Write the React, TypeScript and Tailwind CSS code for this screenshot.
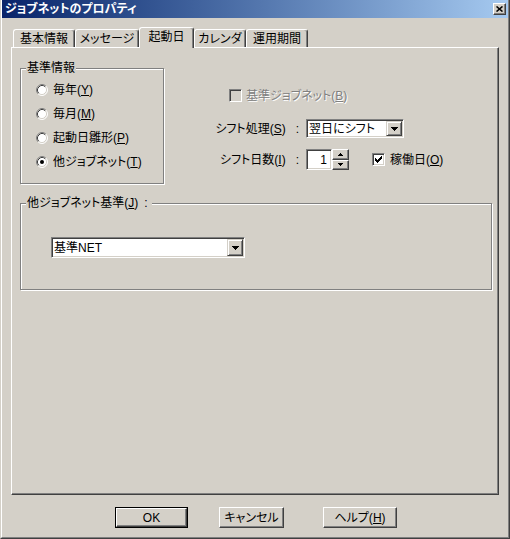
import React from 'react';

const RAISED =
  'border border-t-white border-l-white border-r-[#404040] border-b-[#404040] shadow-[inset_-1px_-1px_0_#808080]';
const SUNKEN =
  'border border-t-[#808080] border-l-[#808080] border-r-white border-b-white shadow-[inset_1px_1px_0_#404040,inset_-1px_-1px_0_#d4d0c8]';
const ETCHED = 'border border-[#808080] shadow-[inset_1px_1px_0_#fff,1px_1px_0_#fff]';
const DISABLED_TEXT = 'text-[#808080] [text-shadow:1px_1px_0_#fff]';

function Radio({ checked }: { checked?: boolean }) {
  return (
    <svg width="12" height="12" viewBox="0 0 12 12" className="shrink-0">
      <circle cx="6" cy="6" r="5" fill="#fff" />
      <path d="M2.11 9.89 A5.5 5.5 0 0 1 9.89 2.11" fill="none" stroke="#808080" />
      <path d="M9.89 2.11 A5.5 5.5 0 0 1 2.11 9.89" fill="none" stroke="#fff" />
      <path d="M2.82 9.18 A4.5 4.5 0 0 1 9.18 2.82" fill="none" stroke="#404040" />
      <path d="M9.18 2.82 A4.5 4.5 0 0 1 2.82 9.18" fill="none" stroke="#d4d0c8" />
      {checked && <circle cx="6" cy="6" r="2" fill="#000" />}
    </svg>
  );
}

function Checkbox({ checked, disabled }: { checked?: boolean; disabled?: boolean }) {
  // classic 7x7 pixel check mark
  const cols = [2, 3, 4, 3, 2, 1, 0];
  return (
    <div className={`${SUNKEN} w-[13px] h-[13px] p-[1px] shrink-0 ${disabled ? 'bg-[#d4d0c8]' : 'bg-white'}`}>
      {checked && (
        <svg width="9" height="9" viewBox="0 0 9 9" shapeRendering="crispEdges">
          {cols.map((top, i) => (
            <rect key={i} x={i + 1} y={top + 1} width="1" height="3" fill="#000" />
          ))}
        </svg>
      )}
    </div>
  );
}

function Arrow() {
  return (
    <svg width="7" height="4" viewBox="0 0 7 4" shapeRendering="crispEdges">
      <polygon points="0,0 7,0 3.5,4" fill="#000" />
    </svg>
  );
}

function SmallArrow({ up }: { up?: boolean }) {
  return (
    <svg width="5" height="3" viewBox="0 0 5 3" shapeRendering="crispEdges">
      <polygon points={up ? '2.5,0 5,3 0,3' : '0,0 5,0 2.5,3'} fill="#000" />
    </svg>
  );
}

function DropButton() {
  return (
    <div className="w-[16px] self-stretch flex items-center justify-center bg-[#d4d0c8] border border-t-[#d4d0c8] border-l-[#d4d0c8] border-r-[#404040] border-b-[#404040] shadow-[inset_1px_1px_0_#fff,inset_-1px_-1px_0_#808080]">
      <Arrow />
    </div>
  );
}

function Combo({ value, className }: { value: string; className: string }) {
  return (
    <div className={`${SUNKEN} ${className} bg-white p-[1px] flex`}>
      <div className="flex-1 flex items-center pl-[1px] whitespace-nowrap">{value}</div>
      <DropButton />
    </div>
  );
}

function Tab({ label, w, active }: { label: string; w: string; active?: boolean }) {
  return (
    <div
      className={`${w} ${
        active ? 'h-[21px] -mb-[1px] relative z-10 pb-[2px]' : 'h-[18px]'
      } bg-[#d4d0c8] border-t border-l border-r border-t-white border-l-white border-r-[#404040] shadow-[inset_-1px_0_0_#808080] rounded-t-[3px] flex items-center justify-center whitespace-nowrap`}
    >
      {label}
    </div>
  );
}

function Group({ label, className, children }: { label: React.ReactNode; className: string; children: React.ReactNode }) {
  return (
    <div className={`relative ${ETCHED} ${className}`}>
      <span className="absolute left-[5px] -top-[8px] px-[1px] bg-[#d4d0c8] whitespace-nowrap">{label}</span>
      {children}
    </div>
  );
}

function Button({ children, w, isDefault }: { children: React.ReactNode; w: string; isDefault?: boolean }) {
  if (isDefault) {
    return (
      <div className={`${w} h-[21px] border border-black flex`}>
        <div className={`${RAISED} flex-1 flex items-center justify-center`}>{children}</div>
      </div>
    );
  }
  return <div className={`${RAISED} ${w} h-[21px] flex items-center justify-center`}>{children}</div>;
}

export default function App() {
  return (
    <div className="w-[510px] h-[539px] bg-[#d4d0c8] border-l border-r border-b border-l-[#d4d0c8] border-r-[#404040] border-b-[#404040] text-[12px] leading-[14px] text-black font-['Liberation_Sans','Noto_Sans_CJK_JP',sans-serif] [font-feature-settings:'palt'] overflow-hidden">
      <div className="h-full border-l border-r border-b border-l-white border-r-[#808080] border-b-[#808080] flex flex-col">
        {/* title bar */}
        <div className="h-[18px] shrink-0 flex items-center justify-between pl-[3px] pr-[2px] bg-linear-to-r from-[#0a246a] to-[#a6caf0]">
          <span className="font-bold text-white whitespace-nowrap">ジョブネットのプロパティ</span>
          <div className={`${RAISED} w-[13px] h-[12px] bg-[#d4d0c8] flex items-center justify-center`}>
            <svg width="7" height="6" viewBox="0 0 7 6">
              <path d="M0.5 0.5 L6.5 5.5 M6.5 0.5 L0.5 5.5" stroke="#000" strokeWidth="1.6" fill="none" />
            </svg>
          </div>
        </div>

        {/* tabs */}
        <div className="mt-[9px] ml-[9px] pl-[2px] h-[20px] flex items-end">
          <Tab label="基本情報" w="w-[62px]" />
          <Tab label="メッセージ" w="w-[64px]" />
          <Tab label="起動日" w="w-[55px]" active />
          <Tab label="カレンダ" w="w-[52px]" />
          <Tab label="運用期間" w="w-[62px]" />
        </div>

        {/* tab panel */}
        <div className="ml-[9px] w-[488px] h-[448px] shrink-0 border border-t-white border-l-white border-r-[#404040] border-b-[#404040] shadow-[inset_-1px_-1px_0_#808080] flex flex-col">
          <div className="flex items-start">
            <Group label="基準情報" className="ml-[8px] mt-[20px] w-[144px] h-[116px] shrink-0">
              <div className="pt-[9px] pl-[15px] flex flex-col">
                <div className="h-[24px] flex items-center gap-[5px]">
                  <Radio />
                  <span>毎年(<u>Y</u>)</span>
                </div>
                <div className="h-[24px] flex items-center gap-[5px]">
                  <Radio />
                  <span>毎月(<u>M</u>)</span>
                </div>
                <div className="h-[24px] flex items-center gap-[5px]">
                  <Radio />
                  <span>起動日雛形(<u>P</u>)</span>
                </div>
                <div className="h-[24px] flex items-center gap-[5px]">
                  <Radio checked />
                  <span>他ジョブネット(<u>T</u>)</span>
                </div>
              </div>
            </Group>

            <div className="ml-[50px] mt-[41px] flex flex-col">
              <div className="h-[13px] pl-[15px] flex items-center gap-[4px]">
                <Checkbox disabled />
                <span className={`${DISABLED_TEXT} whitespace-nowrap`}>
                  基準ジョブネット(<u>B</u>)
                </span>
              </div>
              <div className="mt-[17px] h-[19px] flex items-center">
                <span className="w-[92px] pr-[7px] flex justify-end whitespace-nowrap">
                  <span>シフト処理(<u>S</u>)</span>
                  <span className="ml-[10px]">:</span>
                </span>
                <Combo value="翌日にシフト" className="w-[98px] h-[19px]" />
              </div>
              <div className="mt-[11px] h-[21px] flex items-center">
                <span className="w-[92px] pr-[7px] flex justify-end whitespace-nowrap">
                  <span>シフト日数(<u>I</u>)</span>
                  <span className="ml-[10px]">:</span>
                </span>
                <div className={`${SUNKEN} w-[26px] h-[21px] bg-white flex items-center justify-end pr-[4px]`}>1</div>
                <div className="w-[17px] h-[21px] flex flex-col">
                  <div className={`${RAISED} flex-1 bg-[#d4d0c8] flex items-center justify-center`}>
                    <SmallArrow up />
                  </div>
                  <div className={`${RAISED} flex-1 bg-[#d4d0c8] flex items-center justify-center`}>
                    <SmallArrow />
                  </div>
                </div>
                <div className="ml-[23px] flex items-center gap-[5px]">
                  <Checkbox checked />
                  <span className="whitespace-nowrap">稼働日(<u>O</u>)</span>
                </div>
              </div>
            </div>
          </div>

          <Group
            label={
              <span className="pr-[3px]">
                他ジョブネット基準(<u>J</u>)<span className="ml-[6px]">:</span>
              </span>
            }
            className="ml-[8px] mt-[19px] w-[472px] h-[87px]"
          >
            <div className="ml-[30px] mt-[33px]">
              <Combo value="基準NET" className="w-[194px] h-[21px]" />
            </div>
          </Group>
        </div>

        {/* buttons */}
        <div className="mt-[12px] ml-[113px] flex">
          <Button w="w-[73px]" isDefault>
            OK
          </Button>
          <div className="ml-[31px]">
            <Button w="w-[65px]">キャンセル</Button>
          </div>
          <div className="ml-[39px]">
            <Button w="w-[74px]">
              ヘルプ(<u>H</u>)
            </Button>
          </div>
        </div>
      </div>
    </div>
  );
}
